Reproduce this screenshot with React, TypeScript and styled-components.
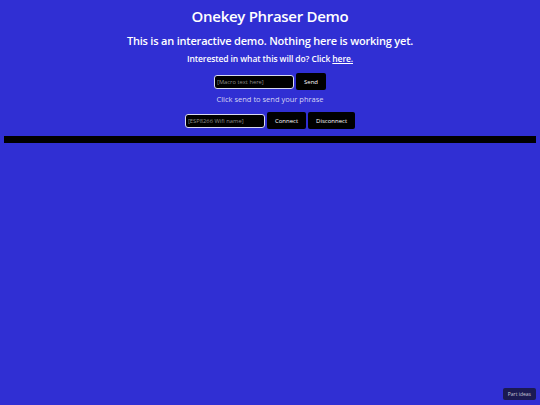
import React from 'react';
import styled, { createGlobalStyle } from 'styled-components';

const GlobalStyle = createGlobalStyle`
	html, body {
		margin: 0;
		padding: 0;
		background: #302fd3;
		height: 100%;
	}
	body {
		padding: 4px;
		box-sizing: border-box;
		font-family: 'Open Sans', 'Liberation Sans', sans-serif;
		color: #ffffff;
	}
`;

const Page = styled.main`
	display: flex;
	flex-direction: column;
	align-items: center;
	text-align: center;
`;

const Title = styled.h1`
	margin: 2px 0 0;
	font-size: 15px;
	font-weight: 600;
	letter-spacing: -0.3px;
	line-height: 20px;
`;

const Subtitle = styled.h2`
	margin: 7px 0 0;
	font-size: 11px;
	font-weight: 600;
	letter-spacing: -0.2px;
	line-height: 15px;
`;

const Intro = styled.p`
	margin: 5px 0 0;
	font-size: 8.5px;
	font-weight: 600;
	letter-spacing: -0.1px;
	line-height: 12px;

	& a {
		color: #ffffff;
		text-decoration: underline;
	}
`;

const FormRow = styled.div<{ $top: number }>`
	display: flex;
	align-items: center;
	gap: 2px;
	margin-top: ${(p) => p.$top}px;
`;

const TextInput = styled.input`
	box-sizing: border-box;
	width: 80px;
	height: 14px;
	padding: 0 2px;
	background: #000000;
	border: 1px solid #d8d8f0;
	border-radius: 3px;
	color: #ffffff;
	font-family: inherit;
	font-size: 5.8px;
	outline: none;

	&::placeholder {
		color: #8e8e8e;
	}
`;

const Button = styled.button`
	box-sizing: border-box;
	height: 17px;
	padding: 0 8px;
	background: #000000;
	border: none;
	border-radius: 2px;
	color: #ffffff;
	font-family: inherit;
	font-size: 6px;
	cursor: pointer;
`;

const Hint = styled.p`
	margin: 4px 0 0;
	font-size: 7.5px;
	color: #d4d4f4;
	line-height: 10px;
`;

const Bar = styled.div`
	align-self: stretch;
	height: 7px;
	margin-top: 7px;
	background: #000000;
`;

const FloatingButton = styled.button`
	position: fixed;
	right: 4px;
	bottom: 5px;
	height: 12px;
	padding: 0 5px;
	background: #1b1a52;
	border: none;
	border-radius: 2px;
	color: #c8c8d8;
	font-family: inherit;
	font-size: 5px;
`;

export default function App() {
	return (
		<>
			<GlobalStyle />
			<Page>
				<Title>Onekey Phraser Demo</Title>
				<Subtitle>This is an interactive demo. Nothing here is working yet.</Subtitle>
				<Intro>
					Interested in what this will do? Click <a href="#about">here.</a>
				</Intro>
				<FormRow $top={8}>
					<TextInput placeholder="[Macro text here]" />
					<Button>Send</Button>
				</FormRow>
				<Hint>Click send to send your phrase</Hint>
				<FormRow $top={8}>
					<TextInput placeholder="[ESP8266 Wifi name]" />
					<Button>Connect</Button>
					<Button>Disconnect</Button>
				</FormRow>
				<Bar />
			</Page>
			<FloatingButton>Part ideas</FloatingButton>
		</>
	);
}
